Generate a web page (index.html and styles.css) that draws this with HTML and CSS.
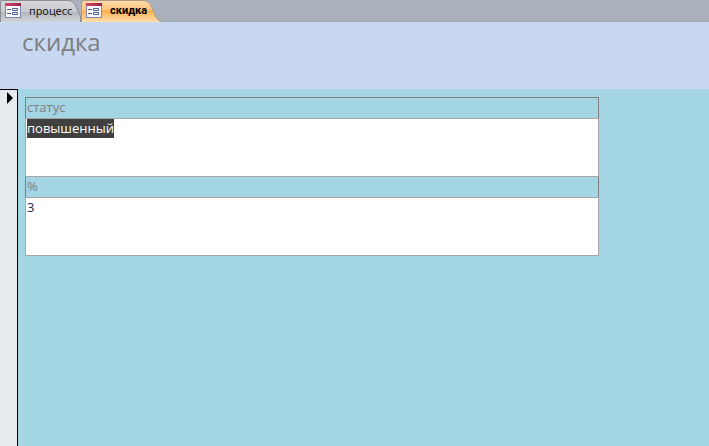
FILE: index.html
```
<!DOCTYPE html>
<html lang="ru">
<head>
    <meta charset="UTF-8">
    <meta name="viewport" content="width=device-width, initial-scale=1.0">
    <title>скидка</title>
    <link rel="stylesheet" href="styles.css">
</head>
<body>
    <!-- Shared shapes for the tabs -->
    <svg class="defs" aria-hidden="true">
        <defs>
            <linearGradient id="gray" x1="0" y1="0" x2="0" y2="1">
                <stop offset="0" stop-color="#d8dadd"/>
                <stop offset="0.5" stop-color="#c8cbcf"/>
                <stop offset="0.55" stop-color="#b5b9be"/>
                <stop offset="1" stop-color="#d0d4d8"/>
            </linearGradient>
            <linearGradient id="orange" x1="0" y1="0" x2="0" y2="1">
                <stop offset="0" stop-color="#ffdcae"/>
                <stop offset="0.4" stop-color="#ffc680"/>
                <stop offset="0.5" stop-color="#ffb050"/>
                <stop offset="1" stop-color="#ffe0b0"/>
            </linearGradient>
            <linearGradient id="bar" x1="0" y1="0" x2="1" y2="0">
                <stop offset="0" stop-color="#d0486c"/>
                <stop offset="1" stop-color="#96204c"/>
            </linearGradient>
            <symbol id="form-icon" viewBox="0 0 16 15">
                <rect x="0.5" y="0.5" width="15" height="14" fill="#f5f6fc" stroke="#8088b0"/>
                <rect width="16" height="3" fill="url(#bar)"/>
                <path d="M2 6.5h4M2 10.5h4" stroke="#505c90"/>
                <path d="M7.500 5.500h5v2h-5zM7.500 9.500h5v2h-5z" fill="#fff" stroke="#505c90"/>
            </symbol>
        </defs>
    </svg>

    <nav class="tabs">
        <button type="button" class="tab tab-process">
            <svg class="tab-shape" viewBox="0 0 81 22">
                <path d="M0.5 22V3Q0.5 0.5 3 0.5H67C72 0.5 74 3 76 7L80.500 16V22" fill="url(#gray)" stroke="#8b8f94"/>
            </svg>
            <svg class="icon"><use href="#form-icon"/></svg>
            <span>процесс</span>
        </button>
        <button type="button" class="tab tab-discount">
            <svg class="tab-shape" viewBox="0 0 81 22">
                <path d="M0.5 22V3Q0.5 0.5 3 0.5H61C67 0.500 69 3 71 8L75 17Q77 21.500 81 21.500V22Z" fill="url(#orange)"/>
                <path d="M0.5 22V3Q0.5 0.5 3 0.5H61C67 0.500 69 3 71 8L75 17Q77 21.500 81 21.500" fill="none" stroke="#b09c84"/>
            </svg>
            <svg class="icon"><use href="#form-icon"/></svg>
            <span>скидка</span>
        </button>
    </nav>

    <header class="form-header">
        <h1>скидка</h1>
    </header>

    <main class="record">
        <button type="button" class="selector" aria-label="Текущая запись">
            <svg width="6" height="12" viewBox="0 0 6 12"><path d="M0 0L6 6L0 12Z"/></svg>
        </button>
        <form class="fields">
            <label for="status">статус</label>
            <textarea id="status" spellcheck="false">повышенный</textarea>
            <label for="percent">%</label>
            <textarea id="percent" spellcheck="false">3</textarea>
        </form>
    </main>

    <script>
        // The first field is selected when the form opens
        const statusField = document.getElementById("status");
        statusField.focus();
        statusField.select();
    </script>
</body>
</html>
```
FILE: styles.css
```
* {
    box-sizing: border-box;
}
body {
    display: flex;
    flex-direction: column;
    min-height: 100vh;
    margin: 0;
    font-family: "Open Sans", "Noto Sans", sans-serif;
    background-color: #a4d5e2;
}
.defs {
    position: absolute;
    width: 0;
    height: 0;
}
.tabs {
    display: flex;
    height: 22px;
    background-color: #abb1bc;
    border-bottom: 1px solid #a0a6b0;
}
.tab {
    position: relative;
    display: flex;
    align-items: center;
    gap: 8px;
    width: 81px;
    height: 22px;
    padding: 0 0 2px 5px;
    border: none;
    background: none;
    font-family: "Noto Sans", sans-serif;
    font-size: 11px;
    color: #222;
}
.tab-discount {
    font-family: Roboto, sans-serif;
    font-weight: bold;
    color: #000;
}
.tab-shape {
    position: absolute;
    left: 0;
    top: 0;
    width: 81px;
    height: 22px;
}
.icon {
    position: relative;
    flex: none;
    width: 16px;
    height: 15px;
}
.tab span {
    position: relative;
}
.form-header {
    height: 67px;
    padding: 4px 22px;
    background-color: #c7d8f0;
}
h1 {
    margin: 0;
    font-size: 24px;
    line-height: 32px;
    font-weight: normal;
    color: #7f7f7f;
}
.record {
    display: flex;
    flex: 1;
}
.selector {
    display: flex;
    flex: none;
    align-items: flex-start;
    justify-content: flex-end;
    width: 18px;
    padding: 2px 4px;
    border: solid #000;
    border-width: 1px 1px 0 0;
    background-color: #e7ebf0;
}
.fields {
    display: flex;
    flex-direction: column;
    flex: 1;
    padding: 8px 110px 8px 7px;
}
label {
    height: 22px;
    padding: 0 1px;
    border: 1px solid #7f7f7f;
    font-size: 13px;
    line-height: 18px;
    color: #7f7f7f;
}
textarea {
    position: relative;
    display: block;
    width: 100%;
    height: 59px;
    margin: -1px 0;
    padding: 0 1px;
    border: 1px solid #a6a6a6;
    border-radius: 0;
    outline: none;
    resize: none;
    background-color: #fff;
    font-family: inherit;
    font-size: 13px;
    line-height: 19px;
    color: #1f2a55;
}
textarea::selection {
    background-color: #404040;
    color: #fff;
}
```
